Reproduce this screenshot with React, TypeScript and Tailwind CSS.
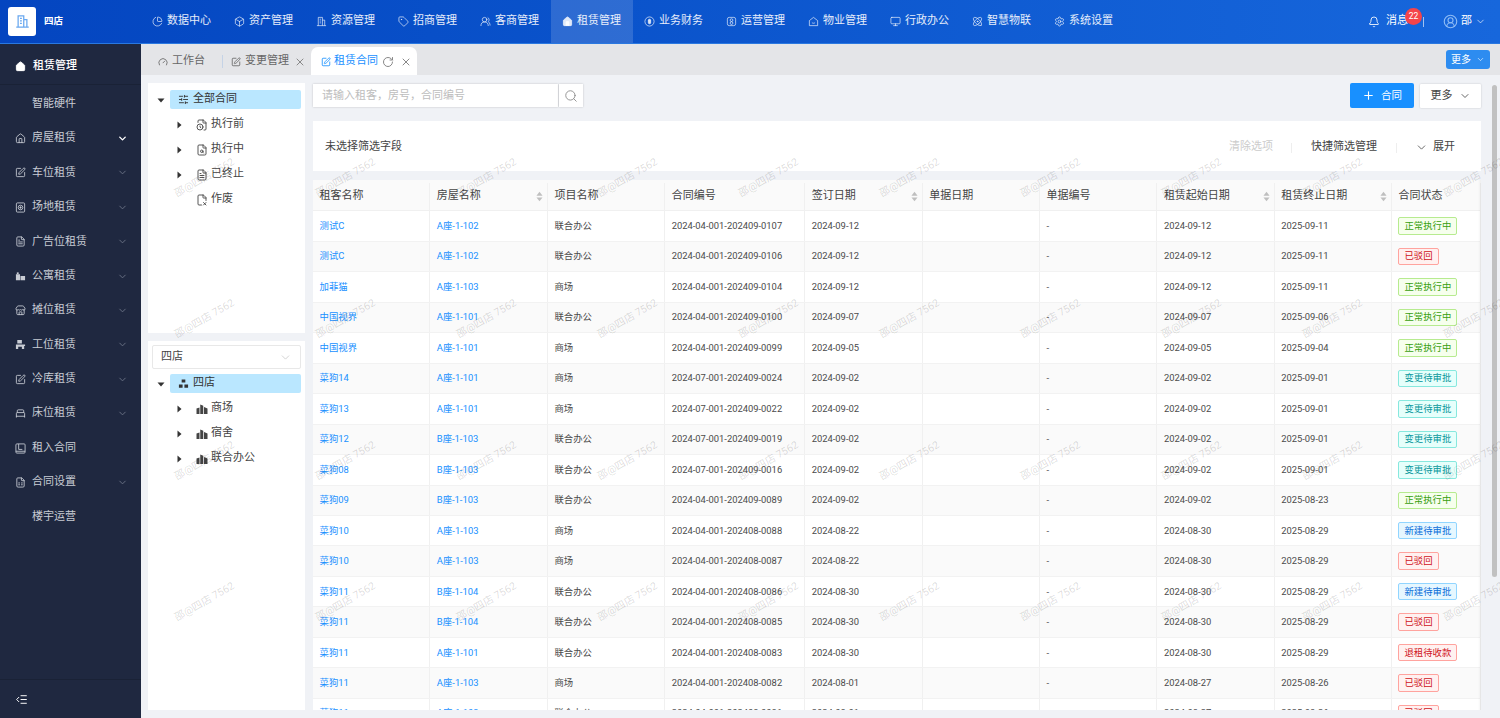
import type { ComponentType } from "react";
import {
  Atom,
  Bell,
  BedSingle,
  Box,
  ChartPie,
  ChevronDown,
  CircleUserRound,
  FileClock,
  FileSearch,
  FileSpreadsheet,
  FileText,
  FileX2,
  Gauge,
  House,
  IndentDecrease,
  Monitor,
  Plus,
  RotateCw,
  Search,
  Settings,
  SlidersHorizontal,
  SquarePen,
  Store,
  Tag,
  UsersRound,
  X,
} from "lucide-react";

type IconProps = { size?: number; strokeWidth?: number; className?: string; fill?: string };
type Icon = ComponentType<IconProps>;

function ResourceIcon({ size = 11, strokeWidth = 1.6, className }: IconProps) {
  return (
    <svg viewBox="0 0 24 24" width={size} height={size} fill="none" stroke="currentColor" strokeWidth={strokeWidth} className={className}>
      <path d="M5 21V3h9v18M14 9h5v12M2 21h20M8 7h3M8 11h3M8 15h3" />
    </svg>
  );
}

function FinanceIcon({ size = 11, strokeWidth = 1.6, className }: IconProps) {
  return (
    <svg viewBox="0 0 24 24" width={size} height={size} fill="none" stroke="currentColor" strokeWidth={strokeWidth} className={className}>
      <circle cx="12" cy="12" r="10" />
      <rect x="9.5" y="7" width="5" height="10" rx="2.5" fill="currentColor" />
    </svg>
  );
}

function OpsIcon({ size = 11, strokeWidth = 1.6, className }: IconProps) {
  return (
    <svg viewBox="0 0 24 24" width={size} height={size} fill="none" stroke="currentColor" strokeWidth={strokeWidth} className={className}>
      <rect x="3" y="3" width="18" height="18" rx="4" />
      <circle cx="12" cy="9" r="3" />
      <circle cx="12" cy="15.5" r="3" />
    </svg>
  );
}

function PropertyIcon({ size = 11, strokeWidth = 1.6, className }: IconProps) {
  return (
    <svg viewBox="0 0 24 24" width={size} height={size} fill="none" stroke="currentColor" strokeWidth={strokeWidth} className={className}>
      <path d="M3 10l9-7 9 7v11H3z" />
      <path d="M8.5 14c1.5 2.4 5.5 2.4 7 0" />
    </svg>
  );
}

function FieldIcon({ size = 11, strokeWidth = 1.8, className }: IconProps) {
  return (
    <svg viewBox="0 0 24 24" width={size} height={size} fill="none" stroke="currentColor" strokeWidth={strokeWidth} className={className}>
      <rect x="3" y="2" width="18" height="20" rx="2" />
      <circle cx="12" cy="12" r="5" />
      <circle cx="12" cy="12" r="1.5" fill="currentColor" />
    </svg>
  );
}

function LeaseInIcon({ size = 11, strokeWidth = 1.8, className }: IconProps) {
  return (
    <svg viewBox="0 0 24 24" width={size} height={size} fill="none" stroke="currentColor" strokeWidth={strokeWidth} className={className}>
      <rect x="2" y="2" width="20" height="20" rx="2" />
      <path d="M8 2v12h8M2 18h20" />
    </svg>
  );
}

function ApartmentIcon({ size = 11, className }: IconProps) {
  return (
    <svg viewBox="0 0 24 24" width={size} height={size} fill="currentColor" className={className}>
      <path d="M2 7h9v13H2zM12 11h10v9H12z" />
      <path d="M4 3h4v4H4z" />
    </svg>
  );
}

function DeskIcon({ size = 11, className }: IconProps) {
  return (
    <svg viewBox="0 0 24 24" width={size} height={size} fill="currentColor" className={className}>
      <path d="M5 2h10v8H5zM2 12h20v3h-2v7h-5v-5H7v5H2z" />
    </svg>
  );
}

function OrgIcon({ size = 11, className }: IconProps) {
  return (
    <svg viewBox="0 0 24 24" width={size} height={size} fill="currentColor" className={className}>
      <path d="M8 3h8v7H8zM2 14h8v7H2zM14 14h8v7h-8z" />
    </svg>
  );
}

function CityIcon({ size = 12, className }: IconProps) {
  return (
    <svg viewBox="0 0 24 24" width={size} height={size} fill="currentColor" className={className}>
      <path d="M1 22V11l6-2v13zM8.500 22V3l6 2.500V22zM16 22V8l7 3v11z" />
    </svg>
  );
}

const navItems: { label: string; icon: Icon; active?: boolean }[] = [
  { label: "数据中心", icon: ChartPie },
  { label: "资产管理", icon: Box },
  { label: "资源管理", icon: ResourceIcon },
  { label: "招商管理", icon: Tag },
  { label: "客商管理", icon: UsersRound },
  { label: "租赁管理", icon: House, active: true },
  { label: "业务财务", icon: FinanceIcon },
  { label: "运营管理", icon: OpsIcon },
  { label: "物业管理", icon: PropertyIcon },
  { label: "行政办公", icon: Monitor },
  { label: "智慧物联", icon: Atom },
  { label: "系统设置", icon: Settings },
];

const sideItems: { label: string; icon?: Icon; chevron?: boolean; bright?: boolean }[] = [
  { label: "智能硬件" },
  { label: "房屋租赁", icon: House, chevron: true, bright: true },
  { label: "车位租赁", icon: SquarePen, chevron: true },
  { label: "场地租赁", icon: FieldIcon, chevron: true },
  { label: "广告位租赁", icon: FileText, chevron: true },
  { label: "公寓租赁", icon: ApartmentIcon, chevron: true },
  { label: "摊位租赁", icon: Store, chevron: true },
  { label: "工位租赁", icon: DeskIcon, chevron: true },
  { label: "冷库租赁", icon: SquarePen, chevron: true },
  { label: "床位租赁", icon: BedSingle, chevron: true },
  { label: "租入合同", icon: LeaseInIcon },
  { label: "合同设置", icon: FileSpreadsheet, chevron: true },
  { label: "楼宇运营" },
];

const columns = [
  { title: "租客名称", width: "w-[117.3px]" },
  { title: "房屋名称", width: "w-[117.6px]", sort: true },
  { title: "项目名称", width: "w-[117.3px]" },
  { title: "合同编号", width: "w-[140px]" },
  { title: "签订日期", width: "w-[117.6px]", sort: true },
  { title: "单据日期", width: "w-[117.3px]" },
  { title: "单据编号", width: "w-[117.3px]" },
  { title: "租赁起始日期", width: "w-[117.3px]", sort: true },
  { title: "租赁终止日期", width: "w-[117.3px]", sort: true },
  { title: "合同状态", width: "flex-1" },
];

const rows = [
  ["测试C", "A座-1-102", "联合办公", "2024-04-001-202409-0107", "2024-09-12", "2024-09-12", "2025-09-11", "正常执行中"],
  ["测试C", "A座-1-102", "联合办公", "2024-04-001-202409-0106", "2024-09-12", "2024-09-12", "2025-09-11", "已驳回"],
  ["加菲猫", "A座-1-103", "商场", "2024-04-001-202409-0104", "2024-09-12", "2024-09-12", "2025-09-11", "正常执行中"],
  ["中国视界", "A座-1-101", "联合办公", "2024-04-001-202409-0100", "2024-09-07", "2024-09-07", "2025-09-06", "正常执行中"],
  ["中国视界", "A座-1-101", "商场", "2024-04-001-202409-0099", "2024-09-05", "2024-09-05", "2025-09-04", "正常执行中"],
  ["菜狗14", "A座-1-101", "商场", "2024-07-001-202409-0024", "2024-09-02", "2024-09-02", "2025-09-01", "变更待审批"],
  ["菜狗13", "A座-1-101", "商场", "2024-07-001-202409-0022", "2024-09-02", "2024-09-02", "2025-09-01", "变更待审批"],
  ["菜狗12", "B座-1-103", "联合办公", "2024-07-001-202409-0019", "2024-09-02", "2024-09-02", "2025-09-01", "变更待审批"],
  ["菜狗08", "B座-1-103", "联合办公", "2024-07-001-202409-0016", "2024-09-02", "2024-09-02", "2025-09-01", "变更待审批"],
  ["菜狗09", "B座-1-103", "联合办公", "2024-04-001-202409-0089", "2024-09-02", "2024-09-02", "2025-08-23", "正常执行中"],
  ["菜狗10", "A座-1-103", "商场", "2024-04-001-202408-0088", "2024-08-22", "2024-08-30", "2025-08-29", "新建待审批"],
  ["菜狗10", "A座-1-103", "商场", "2024-04-001-202408-0087", "2024-08-22", "2024-08-30", "2025-08-29", "已驳回"],
  ["菜狗11", "B座-1-104", "联合办公", "2024-04-001-202408-0086", "2024-08-30", "2024-08-30", "2025-08-29", "新建待审批"],
  ["菜狗11", "B座-1-104", "联合办公", "2024-04-001-202408-0085", "2024-08-30", "2024-08-30", "2025-08-29", "已驳回"],
  ["菜狗11", "A座-1-101", "联合办公", "2024-04-001-202408-0083", "2024-08-30", "2024-08-30", "2025-08-29", "退租待收款"],
  ["菜狗11", "A座-1-103", "商场", "2024-04-001-202408-0082", "2024-08-01", "2024-08-27", "2025-08-26", "已驳回"],
  ["菜狗11", "A座-1-103", "联合办公", "2024-04-001-202408-0081", "2024-08-01", "2024-08-27", "2025-08-26", "已驳回"],
];

const tagStyles: Record<string, string> = {
  正常执行中: "text-[#389e0d] bg-[#f6ffed] border-[#b7eb8f]",
  已驳回: "text-[#cf1322] bg-[#fff1f0] border-[#ffa39e]",
  退租待收款: "text-[#cf1322] bg-[#fff1f0] border-[#ffa39e]",
  变更待审批: "text-[#08979c] bg-[#e6fffb] border-[#87e8de]",
  新建待审批: "text-[#096dd9] bg-[#e6f7ff] border-[#91d5ff]",
};

function Caret({ open }: { open?: boolean }) {
  return (
    <svg viewBox="0 0 8 8" className="w-2 h-2 text-[#333]" fill="currentColor">
      {open ? <path d="M0.5 2.5h7L4 6.5z" /> : <path d="M2.500 0.5v7L6.500 4z" />}
    </svg>
  );
}

function SortIcon() {
  return (
    <svg viewBox="0 0 8 12" className="w-[7px] h-[11px] text-[#bfbfbf]" fill="currentColor">
      <path d="M4 0.5L7.5 5h-7z" />
      <path d="M4 11.5L0.5 7h7z" />
    </svg>
  );
}

function TreeChild({ label, icon: Ic, leaf }: { label: string; icon: Icon; leaf?: boolean }) {
  return (
    <div className="h-[25px] flex items-center text-[11px] text-[#444]">
      <div className="w-[14px] ml-[24px] flex justify-center">{!leaf && <Caret />}</div>
      <Ic size={12} strokeWidth={1.8} className="ml-[10px] text-[#444]" />
      <span className="ml-[3px]">{label}</span>
    </div>
  );
}

function TreeRoot({ label, icon: Ic }: { label: string; icon: Icon }) {
  return (
    <div className="flex items-center h-[19px]">
      <div className="w-[22px] flex justify-center pl-[4px]">
        <Caret open />
      </div>
      <div className="flex-1 h-[19px] mr-[4px] bg-[#bae7ff] rounded-[2px] flex items-center text-[11px] text-[#333]">
        <Ic size={11} strokeWidth={2} className="ml-[8px] mr-[4px] text-[#333]" />
        {label}
      </div>
    </div>
  );
}

function Watermarks() {
  const cells = Array.from({ length: 40 }, (_, i) => i);
  return (
    <div className="absolute left-[134px] top-[107px] grid grid-cols-[repeat(10,141px)] auto-rows-[141.5px] pointer-events-none">
      {cells.map((i) => (
        <div key={i} className="flex items-center justify-center">
          <span className="whitespace-nowrap text-[10.5px] text-black/15 -rotate-[30deg]">邵@四店 7562</span>
        </div>
      ))}
    </div>
  );
}

function TopBar() {
  return (
    <header className="h-[44px] shrink-0 flex bg-gradient-to-r from-[#0445c0] to-[#1767dc] border-b border-[#2a78e0] text-white">
      <div className="w-[141px] shrink-0 flex items-center pl-[8px]">
        <div className="w-[28px] h-[29px] bg-white rounded-[3px] flex items-center justify-center">
          <ResourceIcon size={15} strokeWidth={2} className="text-[#69a8f0]" />
        </div>
        <span className="ml-[8px] text-[9.5px] font-bold">四店</span>
      </div>
      <nav className="flex">
        {navItems.map(({ label, icon: Ic, active }) => (
          <div
            key={label}
            className={`w-[82px] flex items-center pl-[11px] text-[11px] ${active ? "bg-white/15" : ""}`}
          >
            <Ic size={11} strokeWidth={1.6} fill={active ? "currentColor" : "none"} className="text-white/85 mr-[4px]" />
            <span className="text-white/90">{label}</span>
          </div>
        ))}
      </nav>
      <div className="flex-1 flex items-center justify-end pr-[14px] text-[11px]">
        <Bell size={12} strokeWidth={1.7} className="mr-[6px]" />
        <div className="relative">
          消息
          <span className="absolute -top-[5.5px] left-[19px] w-[17px] h-[17px] rounded-full bg-[#f5444a] text-[8.5px] flex items-center justify-center">
            22
          </span>
        </div>
        <div className="w-px h-[10px] bg-white/60 ml-[15px]" />
        <CircleUserRound size={15} strokeWidth={1.8} className="ml-[19px] text-[#8fbcf5]" />
        <span className="ml-[3px]">邵</span>
        <ChevronDown size={11} className="ml-[3px] text-white/70" />
      </div>
    </header>
  );
}

function Sidebar() {
  return (
    <aside className="w-[141px] shrink-0 bg-[#1f2840] flex flex-col text-[11px] text-[#c8ccd4]">
      <div className="h-[41px] shrink-0 flex items-center border-b border-[#1a2236] pl-[15px] pt-[5px] text-white">
        <House size={11} fill="currentColor" />
        <span className="ml-[7px] font-medium">租赁管理</span>
      </div>
      <div className="flex-1 pt-[2px]">
        {sideItems.map(({ label, icon: Ic, chevron, bright }) => (
          <div key={label} className="h-[34.4px] flex items-center pl-[15px] pr-[13px]">
            <div className="w-[17px]">{Ic && <Ic size={11} strokeWidth={1.9} />}</div>
            <span>{label}</span>
            {chevron && (
              <ChevronDown
                size={11}
                strokeWidth={bright ? 3 : 2}
                className={`ml-auto ${bright ? "text-white" : "text-[#6b7386]"}`}
              />
            )}
          </div>
        ))}
      </div>
      <div className="h-[39px] shrink-0 border-t border-[#1a2236] flex items-center pl-[15px]">
        <IndentDecrease size={13} strokeWidth={1.8} className="text-white" />
      </div>
    </aside>
  );
}

function Tabs() {
  return (
    <div className="h-[31px] shrink-0 bg-[#e4e5e8] flex items-end pl-[17px] pr-[10px] text-[11px] text-[#666]">
      <div className="h-[28px] flex items-center pr-[17px] pt-[1px]">
        <Gauge size={10} className="mr-[4px]" />
        工作台
      </div>
      <div className="w-px h-[13px] bg-[#c5d3e6] mb-[7px]" />
      <div className="h-[28px] flex items-center pl-[8px] pr-[6px] pt-[1px]">
        <SquarePen size={10} className="mr-[4px]" />
        变更管理
        <X size={12} className="ml-[5px] text-[#888]" />
      </div>
      <div className="h-[28px] w-[106px] -ml-px bg-white rounded-t-[7px] flex items-center pl-[10px] pt-[1px] text-[#1890ff]">
        <SquarePen size={10} className="mr-[3px]" />
        租赁合同
        <RotateCw size={12} className="ml-[4px] text-[#888]" />
        <X size={12} className="ml-[6px] text-[#888]" />
      </div>
      <button className="ml-auto mb-[6px] w-[44px] h-[19px] bg-[#2d8cf0] rounded-[3px] text-white text-[10px] flex items-center justify-center gap-[5px]">
        更多
        <ChevronDown size={9} className="text-white/80" />
      </button>
    </div>
  );
}

function TreePanels() {
  return (
    <div className="w-[157px] shrink-0 flex flex-col gap-[8px]">
      <div className="h-[250px] bg-white pt-[7px]">
        <TreeRoot label="全部合同" icon={SlidersHorizontal} />
        <div className="pt-[3px]">
          <TreeChild label="执行前" icon={FileClock} />
          <TreeChild label="执行中" icon={FileSearch} />
          <TreeChild label="已终止" icon={FileText} />
          <TreeChild label="作废" icon={FileX2} leaf />
        </div>
      </div>
      <div className="flex-1 bg-white pt-[4px]">
        <div className="mx-[4px] h-[24px] border border-[#e8e8e8] rounded-[2px] flex items-center justify-between px-[8px] text-[11px] text-[#444] mb-[5px]">
          四店
          <ChevronDown size={13} strokeWidth={1.2} className="text-[#bbb]" />
        </div>
        <TreeRoot label="四店" icon={OrgIcon} />
        <div className="pt-[3px]">
          <TreeChild label="商场" icon={CityIcon} />
          <TreeChild label="宿舍" icon={CityIcon} />
          <TreeChild label="联合办公" icon={CityIcon} />
        </div>
      </div>
    </div>
  );
}

function Toolbar() {
  return (
    <div className="h-[25px] shrink-0 flex items-center">
      <div className="w-[245px] h-[23px] bg-white shadow-[0_0_2px_rgba(0,0,0,0.2)] flex items-center pl-[9px] pt-[2px] text-[11px] text-[#bdbdbd]">
        请输入租客，房号，合同编号
      </div>
      <div className="w-[24px] h-[23px] ml-px bg-white shadow-[0_0_2px_rgba(0,0,0,0.2)] flex items-center justify-center">
        <Search size={14} strokeWidth={1.5} className="text-[#888]" />
      </div>
      <button className="ml-auto w-[64px] h-[25px] bg-[#1890ff] rounded-[2px] text-white text-[10.5px] flex items-center justify-center gap-[6px]">
        <Plus size={13} strokeWidth={2} />
        合同
      </button>
      <button className="ml-[6px] w-[61px] h-[24px] bg-white shadow-[0_0_2px_rgba(0,0,0,0.2)] rounded-[1px] pt-[1px] text-[#444] text-[11px] flex items-center justify-center gap-[6px]">
        更多
        <ChevronDown size={12} className="text-[#666]" />
      </button>
    </div>
  );
}

function FilterBar() {
  return (
    <div className="h-[50px] shrink-0 mt-[13px] bg-white flex items-center pl-[12px] pr-[26px] pt-[3px] text-[11px] text-[#444]">
      未选择筛选字段
      <span className="ml-auto text-[#ccc]">清除选项</span>
      <div className="w-px h-[10px] bg-[#eee] ml-[18px] mr-[19px]" />
      快捷筛选管理
      <div className="w-px h-[10px] bg-[#eee] ml-[19px] mr-[18px]" />
      <ChevronDown size={13} strokeWidth={1.6} className="mr-[5px] text-[#555]" />
      展开
    </div>
  );
}

function ContractTable() {
  return (
    <div className="flex-1 min-h-0 mt-[9px] overflow-hidden relative bg-white">
      <div className="h-[31.3px] flex bg-[#fafafa] border-b border-[#f0f0f0] pt-[3px] text-[11px] text-[#444]">
        {columns.map((c) => (
          <div
            key={c.title}
            className={`${c.width} shrink-0 border-r border-[#f0f0f0] pl-[6.5px] pr-[4px] flex items-center justify-between`}
          >
            {c.title}
            {c.sort && <SortIcon />}
          </div>
        ))}
      </div>
      {rows.map((r, i) => (
        <div
          key={r[3]}
          className={`h-[30.47px] flex items-center border-b border-[#f2f2f2] text-[9.4px] text-[#4a4a4a] ${
            i % 2 === 1 ? "bg-[#fafafa]" : "bg-white"
          }`}
        >
          {columns.map((c, ci) => {
            const values = [r[0], r[1], r[2], r[3], r[4], "", "-", r[5], r[6]];
            return (
              <div
                key={c.title}
                className={`${c.width} h-full shrink-0 border-r border-[#f0f0f0] pl-[6.5px] flex items-center ${
                  ci < 2 ? "text-[#1890ff]" : ""
                }`}
              >
                {ci < 9 ? (
                  values[ci]
                ) : (
                  <span className={`h-[17.5px] px-[5px] border rounded-[2px] flex items-center ${tagStyles[r[7]]}`}>
                    {r[7]}
                  </span>
                )}
              </div>
            );
          })}
        </div>
      ))}
      <div className="absolute top-0 right-0 bottom-0 w-[3px] bg-gradient-to-l from-black/5 to-transparent" />
    </div>
  );
}

export default function App() {
  return (
    <div className="relative h-[718px] w-[1500px] overflow-hidden flex flex-col bg-[#f0f2f6] font-['Roboto','Noto_Sans_CJK_SC',sans-serif]">
      <TopBar />
      <div className="flex-1 min-h-0 flex">
        <Sidebar />
        <main className="flex-1 min-w-0 flex flex-col">
          <Tabs />
          <div className="flex-1 min-h-0 flex pt-[8px] pb-[8px] pl-[7px]">
            <TreePanels />
            <div className="flex-1 min-w-0 ml-[8px] mr-[11px] flex flex-col">
              <Toolbar />
              <FilterBar />
              <ContractTable />
            </div>
            <div className="w-[5px] mr-[3px] mt-[2px] h-[492px] bg-[#c1c1c1] rounded-full" />
          </div>
        </main>
      </div>
      <Watermarks />
    </div>
  );
}
